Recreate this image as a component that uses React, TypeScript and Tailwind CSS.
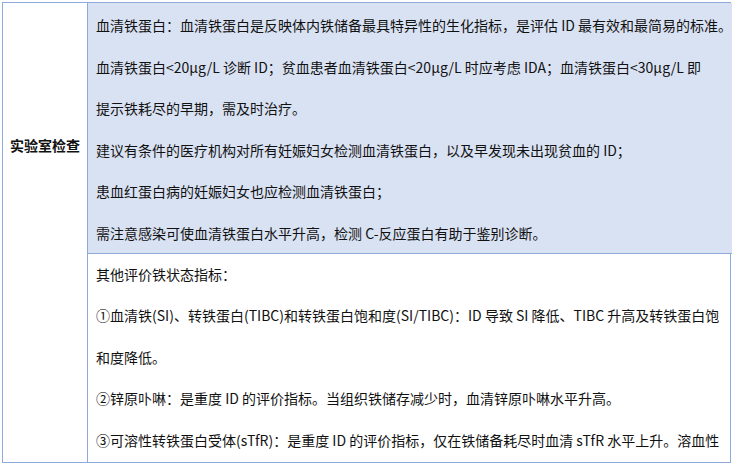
import React from 'react';

const font = { fontFamily: '"Noto Sans CJK SC", "Noto Sans", sans-serif' };

const ferritinLines = [
  '血清铁蛋白：血清铁蛋白是反映体内铁储备最具特异性的生化指标，是评估 ID 最有效和最简易的标准。',
  '血清铁蛋白<20μg/L 诊断 ID；贫血患者血清铁蛋白<20μg/L 时应考虑 IDA；血清铁蛋白<30μg/L 即',
  '提示铁耗尽的早期，需及时治疗。',
  '建议有条件的医疗机构对所有妊娠妇女检测血清铁蛋白，以及早发现未出现贫血的 ID；',
  '患血红蛋白病的妊娠妇女也应检测血清铁蛋白；',
  '需注意感染可使血清铁蛋白水平升高，检测 C-反应蛋白有助于鉴别诊断。',
];

const otherLines = [
  '其他评价铁状态指标：',
  '①血清铁(SI)、转铁蛋白(TIBC)和转铁蛋白饱和度(SI/TIBC)：ID 导致 SI 降低、TIBC 升高及转铁蛋白饱',
  '和度降低。',
  '②锌原卟啉：是重度 ID 的评价指标。当组织铁储存减少时，血清锌原卟啉水平升高。',
  '③可溶性转铁蛋白受体(sTfR)：是重度 ID 的评价指标，仅在铁储备耗尽时血清 sTfR 水平上升。溶血性',
];

function Lines({ lines }: { lines: string[] }) {
  return (
    <>
      {lines.map((l, i) => (
        <div key={i} className="whitespace-nowrap leading-[41.6px]">
          {l}
        </div>
      ))}
    </>
  );
}

export default function App() {
  return (
    <div className="w-[733px] h-[463px] bg-white overflow-hidden pt-[2px] pl-[2px]" style={font}>
      <div className="w-[729px] grid grid-cols-[85px_1fr] border border-[#8eaadb] text-[14px] text-[#111]">
        <div className="row-span-2 border-r border-[#8eaadb] pt-[132px] text-center font-bold">
          实验室检查
        </div>
        <div className="bg-[#d9e2f3] border-b border-[#8eaadb] pl-[8px] pt-[2px] pb-[0px]">
          <div className="-mb-[2px]">
            <Lines lines={ferritinLines} />
          </div>
        </div>
        <div className="pl-[8px]">
          <Lines lines={otherLines} />
        </div>
      </div>
    </div>
  );
}
